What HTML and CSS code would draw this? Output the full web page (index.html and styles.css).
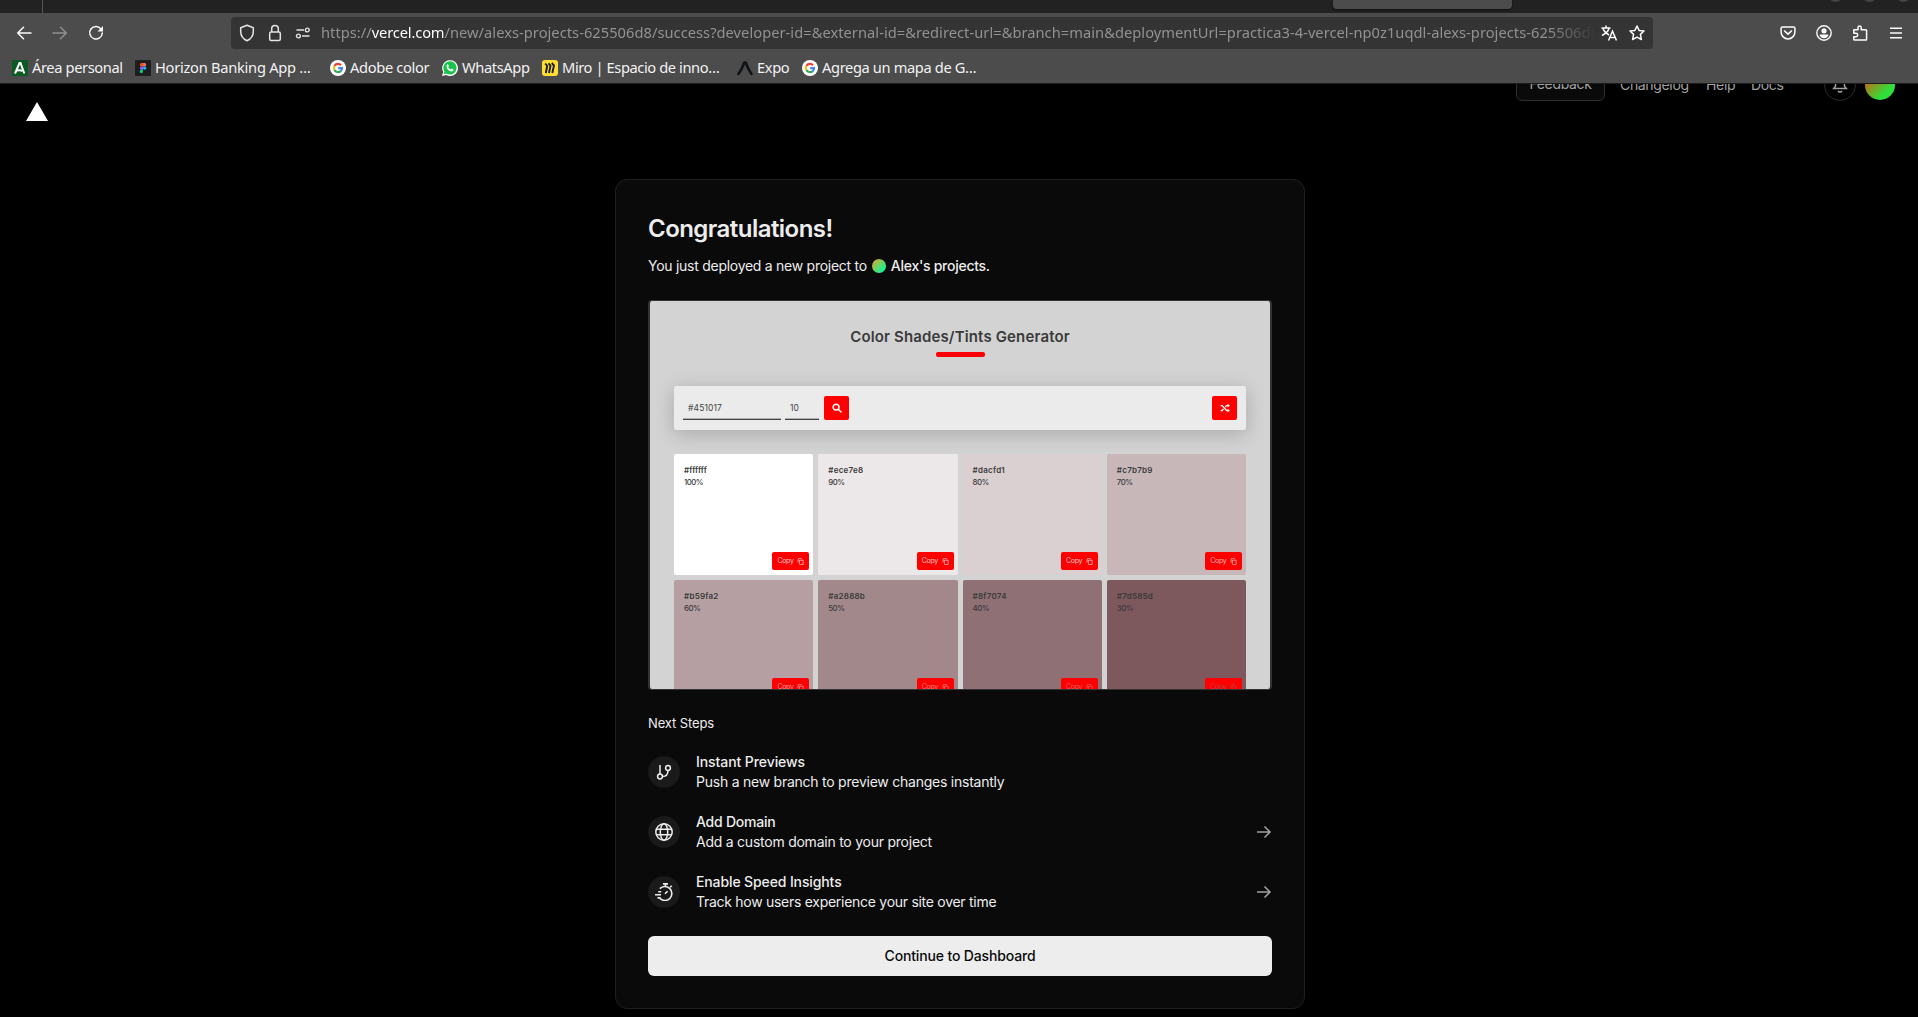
FILE: index.html
```html
<!DOCTYPE html>
<html lang="es">
<head>
<meta charset="utf-8">
<title>Congratulations! – Vercel</title>
<link rel="stylesheet" href="styles.css">
</head>
<body>
<svg width="0" height="0" class="defs">
  <symbol id="google" viewBox="0 0 16 16">
    <circle cx="8" cy="8" r="8" fill="#fff"/>
    <g fill="none" stroke-width="2.1">
      <path d="M4.4 6A4.1 4.1 0 0 1 11 5.2" stroke="#ea4335"/>
      <path d="M4.4 6A4.2 4.2 0 0 0 4.4 10" stroke="#fbbc05"/>
      <path d="M4.4 10A4.1 4.1 0 0 0 10.7 11.1" stroke="#34a853"/>
      <path d="M8.2 8.1H12.1A4.1 4.1 0 0 1 10.7 11.1" stroke="#4285f4"/>
    </g>
  </symbol>
  <symbol id="copy" viewBox="0 0 16 16">
    <path d="M5.500 5h8.500v10H7.500a2 2 0 0 1-2-2zM2.500 10V3a2 2 0 0 1 2-2H11" fill="none" stroke="currentColor" stroke-width="1.800"/>
  </symbol>
  <symbol id="arrow" viewBox="0 0 16 16">
    <path d="M1 8h13M8.500 2.500 14 8l-5.500 5.500" fill="none" stroke="currentColor" stroke-width="1.5"/>
  </symbol>
</svg>

<header class="browser">
  <div class="tabs">
    <span class="tab-line"></span><span class="tab-box"></span>
    <span class="win-buttons"><i></i><i></i><i></i></span>
  </div>
  <div class="toolbar">
    <nav class="nav-icons">
      <svg viewBox="0 0 16 16"><path d="M15 8H2M7.500 2.200 1.700 8l5.800 5.800" fill="none" stroke="#fbfbfe" stroke-width="1.5" stroke-linecap="round" stroke-linejoin="round"/></svg>
      <svg viewBox="0 0 16 16"><path d="M1 8h13M8.500 2.200 14.300 8l-5.800 5.800" fill="none" stroke="#8f8f91" stroke-width="1.5" stroke-linecap="round" stroke-linejoin="round"/></svg>
      <svg viewBox="0 0 16 16"><path d="M13.300 4.300A6.300 6.300 0 1 0 14.300 8" fill="none" stroke="#fbfbfe" stroke-width="1.5" stroke-linecap="round"/><path d="M15 1v5.500H9.500z" fill="#fbfbfe"/></svg>
    </nav>
    <div class="urlbar">
      <svg class="shield" viewBox="0 0 16 18"><path d="M8 1.200 14.300 3.700V7.500c0 4.200-2.500 7.500-6.300 9.200C4.200 15 1.700 11.700 1.700 7.500V3.700z" fill="none" stroke="#e4e4e6" stroke-width="1.500" stroke-linejoin="round"/></svg>
      <svg class="lock" viewBox="0 0 14 18"><rect x="1.700" y="8" width="10.600" height="8.500" rx="1.500" fill="none" stroke="#e4e4e6" stroke-width="1.500"/><path d="M3.700 8V4.800a3.300 3.300 0 0 1 6.600 0V8" fill="none" stroke="#e4e4e6" stroke-width="1.500"/></svg>
      <svg class="perms" viewBox="0 0 16 12"><g fill="none" stroke="#e4e4e6" stroke-width="1.400"><path d="M1.500 3H9M7 9h7.500"/><circle cx="12.300" cy="3" r="1.900"/><circle cx="3.400" cy="9" r="1.900"/></g></svg>
      <div class="url">https://<b>vercel.com</b>/new/alexs-projects-625506d8/success?developer-id=&amp;external-id=&amp;redirect-url=&amp;branch=main&amp;deploymentUrl=practica3-4-vercel-np0z1uqdl-alexs-projects-625506d8</div>
      <svg class="translate" viewBox="0 0 16 16"><g fill="none" stroke="#fbfbfe" stroke-width="1.500"><path d="M.5 3H9.500M5 .5V3M2 3.500C3 7 5.500 8.500 8 10M8 3.500C7 7 4 9 1 10.500M7.500 15.500 11.500 6.200 15.500 15.500M9 12.500h5"/></g></svg>
      <svg class="star" viewBox="0 0 16 16"><path d="M8 1 10.100 5.400 15 6 11.400 9.400 12.400 14.500 8 12.100 3.600 14.500 4.600 9.400 1 6 5.900 5.400z" fill="none" stroke="#fbfbfe" stroke-width="1.500" stroke-linejoin="round"/></svg>
    </div>
    <div class="tools">
      <svg viewBox="0 0 16 16"><path d="M2.300 2h11.400a1.200 1.200 0 0 1 1.200 1.200V7a6.900 6.900 0 0 1-13.800 0V3.200A1.200 1.200 0 0 1 2.300 2z" fill="none" stroke="#fbfbfe" stroke-width="1.500"/><path d="M4.600 6 8 9.200 11.400 6" fill="none" stroke="#fbfbfe" stroke-width="1.700" stroke-linecap="round" stroke-linejoin="round"/></svg>
      <svg viewBox="0 0 16 16"><circle cx="8" cy="8" r="7.200" fill="none" stroke="#fbfbfe" stroke-width="1.400"/><circle cx="8" cy="5.800" r="2.600" fill="#fbfbfe"/><path d="M3.500 9.500h9c-.3 2.300-2 3.700-4.500 3.700s-4.200-1.400-4.500-3.700z" fill="#fbfbfe"/></svg>
      <svg viewBox="0 0 16 16"><path d="M1.800 4.700H6V2.500a1.600 1.600 0 0 1 3.200 0V4.700h4.600a.8.8 0 0 1 .8.800V14.300a.8.8 0 0 1-.8.800H2.600a.8.8 0 0 1-.8-.8V11.700H4a1.700 1.700 0 0 0 0-3.400H1.800z" fill="none" stroke="#fbfbfe" stroke-width="1.500" stroke-linejoin="round"/></svg>
      <svg viewBox="0 0 16 16"><path d="M2 3.300h12M2 8h12M2 12.700h12" stroke="#fbfbfe" stroke-width="1.400"/></svg>
    </div>
  </div>
  <div class="bookmarks">
    <a class="bm area"><svg viewBox="0 0 16 16"><path fill="#0b5a23" d="M0 0h16v16H0z"/><path d="M3 13.500 7.500 3h1l3.800 10.500M5 10.500c2-.5 4-.5 5.500.5" fill="none" stroke="#fff" stroke-width="2"/></svg><span>Área personal</span></a>
    <a class="bm horizon"><svg viewBox="0 0 16 16"><path fill="#1e1e1e" d="M0 0h16v16H0z"/><path d="M8 3H6.500a1.700 1.700 0 0 0 0 3.400H8z" fill="#f24e1e"/><path d="M8 3h1.500a1.700 1.700 0 0 1 0 3.400H8z" fill="#ff7262"/><path d="M8 6.400H6.500a1.700 1.700 0 0 0 0 3.400H8z" fill="#a259ff"/><circle cx="9.700" cy="8.100" r="1.700" fill="#1abcfe"/><path d="M8 9.800H6.500A1.700 1.700 0 1 0 8 11.500z" fill="#0acf83"/></svg><span>Horizon Banking App …</span></a>
    <a class="bm adobe"><svg><use href="#google"/></svg><span>Adobe color</span></a>
    <a class="bm whats"><svg viewBox="0 0 16 16"><path d="M0 16 1.200 12A7.900 7.900 0 1 1 4.200 15z" fill="#fff"/><path d="M1.700 14.300 2.500 11.600A6.600 6.600 0 1 1 4.500 13.500z" fill="#19c24a"/><path d="M4.700 5.200c.6-1.300 1.400-1.100 1.700-.4l.5 1.300-.7 1c.6 1.200 1.500 2 2.700 2.500l.9-1 1.500.8c.6.300.2 1.400-.6 1.900C8 12.200 3.600 8.200 4.700 5.200z" fill="#fff"/></svg><span>WhatsApp</span></a>
    <a class="bm miro"><svg viewBox="0 0 16 16"><rect width="16" height="16" rx="3" fill="#ffdd33"/><path d="M3.200 3.500 5.200 6 3.800 13M6.500 3.300 8.500 5.700 7 13M9.800 3 12 5.500 10.300 13" fill="none" stroke="#1c1c1e" stroke-width="1.900"/></svg><span>Miro | Espacio de inno…</span></a>
    <a class="bm expo"><svg viewBox="0 0 16 16"><path d="M1.500 14C4 10.500 6.300 5.500 7.300 2.500h1.400C9.700 5.500 12 10.500 14.500 14" fill="none" stroke="#101418" stroke-width="2.600" stroke-linecap="round" stroke-linejoin="round"/></svg><span>Expo</span></a>
    <a class="bm agrega"><svg><use href="#google"/></svg><span>Agrega un mapa de G…</span></a>
  </div>
</header>

<main class="page">
  <div class="site-header">
    <svg class="logo" viewBox="0 0 22 19"><path d="M11 0 22 19H0z" fill="#fff"/></svg>
    <nav class="site-nav">
      <a class="feedback">Feedback</a>
      <a class="changelog">Changelog</a>
      <a class="help">Help</a>
      <a class="docs">Docs</a>
      <span class="bell"><svg viewBox="0 0 16 16"><path d="M3.500 7a4.500 4.500 0 0 1 9 0v2.300l1.800 2.200H1.700l1.800-2.200zM6 14c.8 1.200 3.200 1.200 4 0" fill="none" stroke="#a1a1a1" stroke-width="1.500"/></svg></span>
      <span class="avatar"></span>
    </nav>
  </div>

  <section class="card">
    <h1>Congratulations!</h1>
    <p class="intro"><span class="lead">You just deployed a new project to</span><i class="team-dot"></i><b>Alex's projects.</b></p>

    <div class="preview">
      <h2>Color Shades/Tints Generator</h2>
      <div class="rule"></div>
      <div class="form">
        <span class="field hex">#451017</span>
        <span class="field num">10</span>
        <span class="square"><svg viewBox="0 0 16 16"><path d="M6.500 1.800a4.700 4.700 0 1 0 0 9.400 4.700 4.700 0 0 0 0-9.400M10 10l4.500 4.500" fill="none" stroke="#fff" stroke-width="2.400" stroke-linecap="round"/></svg></span>
        <span class="square shuffle"><svg viewBox="0 0 16 16"><path d="M1 4h2.500l7 8H13M1 12h2.500L5.600 9.600M8.400 6.400 10.500 4H13" fill="none" stroke="#fff" stroke-width="2"/><path d="M12 1l4 3-4 3zM12 9l4 3-4 3z" fill="#fff"/></svg></span>
      </div>
      <div class="swatches">
        <div class="sw s100"><b>#ffffff</b><span>100%</span><em>Copy<svg><use href="#copy"/></svg></em></div>
        <div class="sw s90"><b>#ece7e8</b><span>90%</span><em>Copy<svg><use href="#copy"/></svg></em></div>
        <div class="sw s80"><b>#dacfd1</b><span>80%</span><em>Copy<svg><use href="#copy"/></svg></em></div>
        <div class="sw s70"><b>#c7b7b9</b><span>70%</span><em>Copy<svg><use href="#copy"/></svg></em></div>
        <div class="sw s60"><b>#b59fa2</b><span>60%</span><em>Copy<svg><use href="#copy"/></svg></em></div>
        <div class="sw s50"><b>#a2888b</b><span>50%</span><em>Copy<svg><use href="#copy"/></svg></em></div>
        <div class="sw s40"><b>#8f7074</b><span>40%</span><em>Copy<svg><use href="#copy"/></svg></em></div>
        <div class="sw s30"><b>#7d585d</b><span>30%</span><em>Copy<svg><use href="#copy"/></svg></em></div>
      </div>
    </div>

    <h3>Next Steps</h3>
    <ul class="steps">
      <li>
        <span class="badge"><svg class="small" viewBox="0 0 16 16"><g fill="none" stroke="#ededed" stroke-width="1.500"><path d="M4 1v9M12 6.500c0 3.500-2 6-5.500 6"/><circle cx="4" cy="12.500" r="2.400"/><circle cx="12" cy="4" r="2.400"/></g></svg></span>
        <div class="copy previews"><b>Instant Previews</b><p>Push a new branch to preview changes instantly</p></div>
      </li>
      <li>
        <span class="badge"><svg viewBox="0 0 18 18"><g fill="none" stroke="#ededed" stroke-width="1.500"><circle cx="9" cy="9" r="8.200"/><ellipse cx="9" cy="9" rx="3.700" ry="8.200"/><path d="M1.500 6.300h15M1.500 11.700h15"/></g></svg></span>
        <div class="copy domain"><b>Add Domain</b><p>Add a custom domain to your project</p></div>
        <svg class="go"><use href="#arrow"/></svg>
      </li>
      <li>
        <span class="badge"><svg viewBox="0 0 18 18"><g fill="none" stroke="#ededed" stroke-width="1.600"><path d="M4.800 5.600A7 7 0 1 1 5.200 15.700M8 .9h5M10.500 1v2.200M15.200 4.300l1.500-1.500M10 10.800l2.600-2.600M3.200 8.700h3M0 11.700h6M2.500 14.900h3.200"/></g></svg></span>
        <div class="copy speed"><b>Enable Speed Insights</b><p>Track how users experience your site over time</p></div>
        <svg class="go"><use href="#arrow"/></svg>
      </li>
    </ul>
    <a class="continue">Continue to Dashboard</a>
  </section>
</main>
</body>
</html>
```
FILE: styles.css
```css
* { box-sizing: border-box; }
html, body { height: 100%; margin: 0; overflow: hidden; }
body {
  display: flex;
  flex-direction: column;
  background: #000;
  color: #ededed;
  font-family: Inter, "Liberation Sans", sans-serif;
  font-size: 14px;
}
h1, h2, h3, p, ul { margin: 0; padding: 0; }
svg { display: block; flex: none; }
.defs { position: absolute; }

/* Browser chrome */
.browser {
  flex: none;
  height: 84px;
  background: #4c4c4c;
  border-bottom: 1px solid #1c1c1c;
  font-family: "Noto Sans", "Open Sans", sans-serif;
  font-size: 14.67px;
  color: #f2f2f4;
}
.tabs { display: flex; height: 13px; background: #222; }
.tab-line { width: 1px; height: 13px; margin-left: 42px; background: #555; }
.tab-box { width: 179px; height: 9px; margin-left: 1290px; background: #4c4c4c; border-radius: 0 0 4px 4px; box-shadow: 0 1px 2px #111; }
.win-buttons { display: flex; gap: 19px; height: 2px; margin-left: 316px; overflow: hidden; }
.win-buttons i { width: 15px; height: 15px; margin-top: -13px; border-radius: 50%; background: #444; }
.toolbar { display: flex; align-items: flex-start; height: 40px; padding-top: 4px; }
.nav-icons { display: flex; gap: 20px; width: 231px; padding: 8px 0 0 16px; }
.nav-icons svg { width: 16px; height: 16px; }
.urlbar { display: flex; align-items: center; width: 1422px; height: 32px; background: #343434; border-radius: 4px; }
.shield { width: 16px; height: 18px; margin-left: 8px; }
.lock { width: 14px; height: 18px; margin-left: 13px; }
.perms { width: 16px; height: 12px; margin-left: 13px; }
.url {
  width: 1277px;
  margin-left: 10px;
  padding-bottom: 2px;
  overflow: hidden;
  white-space: nowrap;
  letter-spacing: .04px;
  color: #929294;
  -webkit-mask-image: linear-gradient(90deg, #000 1225px, transparent 1275px);
  mask-image: linear-gradient(90deg, #000 1225px, transparent 1275px);
}
.url b { font-weight: 400; color: #fbfbfe; letter-spacing: -.15px; }
.translate { width: 16px; height: 16px; margin-left: 3px; }
.star { width: 16px; height: 16px; margin-left: 12px; }
.tools { display: flex; gap: 20px; margin-left: 127px; padding-top: 8px; }
.tools svg { width: 16px; height: 16px; }
.bookmarks { display: flex; height: 30px; padding-left: 12px; }
.bm { display: flex; align-items: center; gap: 4px; height: 30px; white-space: nowrap; }
.bm svg { width: 16px; height: 16px; }
.bm span { padding-bottom: 2px; line-height: 20px; }
.area { width: 123px; letter-spacing: -.38px; }
.horizon { width: 195px; letter-spacing: -.27px; }
.adobe { width: 112px; letter-spacing: -.33px; }
.whats { width: 100px; letter-spacing: -.38px; }
.miro { width: 195px; letter-spacing: -.41px; }
.expo { width: 65px; letter-spacing: -.37px; }
.agrega { letter-spacing: -.37px; }

/* Site header, scrolled partly under the toolbar */
.page { flex: 1; min-height: 0; overflow: hidden; }
.site-header { display: flex; justify-content: space-between; height: 95px; padding: 0 23px 0 26px; }
.logo { width: 22px; height: 19px; margin-top: 18px; }
.site-nav { display: flex; align-items: center; height: 32px; margin-top: -15px; color: #a1a1a1; letter-spacing: -.34px; }
.feedback { height: 32px; width: 89px; line-height: 28px; text-align: center; background: #0a0a0a; border: 1px solid #2e2e2e; border-radius: 6px; }
.changelog, .help, .docs { padding-bottom: 2px; }
.changelog { width: 86px; margin-left: 15px; }
.help { width: 45px; }
.docs { width: 73px; }
.bell { display: flex; align-items: center; justify-content: center; width: 32px; height: 32px; border: 1px solid #2a2a2a; border-radius: 50%; }
.bell svg { width: 16px; height: 16px; margin-top: -1px; }
.avatar { width: 30px; height: 30px; margin: -1px 0 0 9px; border-radius: 50%; background: linear-gradient(135deg, #f0480c 5%, #2ee03a 72%); }

/* Deployment card */
.card {
  width: 690px;
  height: 830px;
  margin-left: 615px;
  padding: 32px;
  background: #0a0a0a;
  border: 1px solid #1f1f1f;
  border-radius: 12px;
}
.card h1 { height: 32px; font-size: 24px; line-height: 34px; font-weight: 600; letter-spacing: -.54px; }
.intro { display: flex; align-items: center; height: 20px; margin-top: 12px; line-height: 20px; }
.lead { letter-spacing: -.27px; }
.team-dot { width: 14px; height: 14px; margin: 0 5px 0 5px; border-radius: 50%; background: linear-gradient(135deg, #f0a020, #20f090 75%); }
.intro b { font-weight: 500; letter-spacing: -.27px; }

.preview {
  width: 624px;
  height: 390px;
  margin-top: 24px;
  padding: 26px 24px 0;
  overflow: hidden;
  background: #d3d3d3;
  border: 1px solid #333;
  border-width: 1px 2px;
  border-radius: 4px;
  color: #3a3a3a;
}
.preview h2 { height: 18px; font-size: 15px; line-height: 19px; font-weight: 600; letter-spacing: .14px; text-align: center; }
.rule { width: 49px; height: 5px; margin: 7px auto 0; background: red; border-radius: 2px; }
.form {
  display: flex;
  width: 572px;
  height: 44px;
  margin-top: 29px;
  padding: 10px 9px;
  background: #ebebeb;
  border-radius: 2px;
  box-shadow: 0 4px 20px rgba(0, 0, 0, .2);
}
.field { height: 24px; padding-left: 5px; border-bottom: 1px solid #444; box-shadow: inset 0 -.5px #777; font-size: 8.500px; line-height: 24px; color: #444; }
.hex { width: 98px; letter-spacing: .13px; }
.num { width: 34px; margin-left: 4px; }
.square { display: flex; align-items: center; justify-content: center; width: 25px; height: 24px; margin-left: 5px; background: red; border-radius: 2px; }
.square svg { width: 10px; height: 10px; }
.shuffle { margin-left: auto; }
.swatches { display: grid; grid-template-columns: repeat(4, 139.400px); grid-auto-rows: 121px; gap: 5px 4.900px; margin-top: 24px; }
.sw { position: relative; padding: 11px 10px; border-radius: 2px; font-size: 7.800px; line-height: 12px; }
.sw b, .sw span { display: block; }
.sw b { height: 12px; font-size: 8px; line-height: 10px; font-weight: 600; letter-spacing: .25px; }
.sw span { line-height: 11px; font-weight: 500; letter-spacing: -.5px; }
.sw em {
  position: absolute;
  right: 4px;
  bottom: 5px;
  display: flex;
  align-items: center;
  justify-content: space-between;
  width: 37px;
  height: 18px;
  padding: 0 5px;
  background: red;
  border-radius: 2px;
  font-size: 7px;
  font-style: normal;
  letter-spacing: -.3px;
  color: #ffc8c8;
}
.sw em svg { width: 7px; height: 7px; }
.sw em use { width: 7px; height: 7px; }
.s100 { background: #fff; }
.s90 { background: #ece7e8; }
.s80 { background: #dacfd1; }
.s70 { background: #c7b7b9; }
.s60 { background: #b59fa2; }
.s50 { background: #a2888b; }
.s40 { background: #8f7074; }
.s30 { background: #7d585d; }
.s100 b { letter-spacing: .1px; }
.s70 em { color: #ffb4b4; }
.s60 em { color: #ff9c9c; }
.s50 em { color: #ff8080; }
.s40 em { color: #d86060; }
.s30 em { color: #b84040; }

/* Next steps */
.card h3 { height: 20px; margin-top: 23px; font-size: 13px; line-height: 20px; font-weight: 400; letter-spacing: -.12px; }
.steps { display: grid; gap: 20px; margin-top: 19px; list-style: none; }
.steps li { display: flex; height: 40px; }
.badge { display: flex; align-items: center; justify-content: center; width: 32px; height: 32px; margin-top: 4px; background: #1a1a1a; border-radius: 50%; }
.badge svg { width: 18px; height: 18px; }
.badge .small { width: 16px; height: 16px; }
.copy { flex: 1; margin-left: 16px; line-height: 20px; letter-spacing: -.24px; }
.copy b { display: block; font-weight: 500; }
.previews b { letter-spacing: -.08px; }
.speed b { letter-spacing: -.12px; }
.speed p { letter-spacing: -.28px; }
.go { width: 16px; height: 16px; margin-top: 12px; color: #a1a1a1; }
.continue {
  display: block;
  height: 40px;
  margin-top: 24px;
  background: #ededed;
  border-radius: 6px;
  color: #0a0a0a;
  font-weight: 500;
  line-height: 40px;
  letter-spacing: -.15px;
  text-align: center;
}
```
